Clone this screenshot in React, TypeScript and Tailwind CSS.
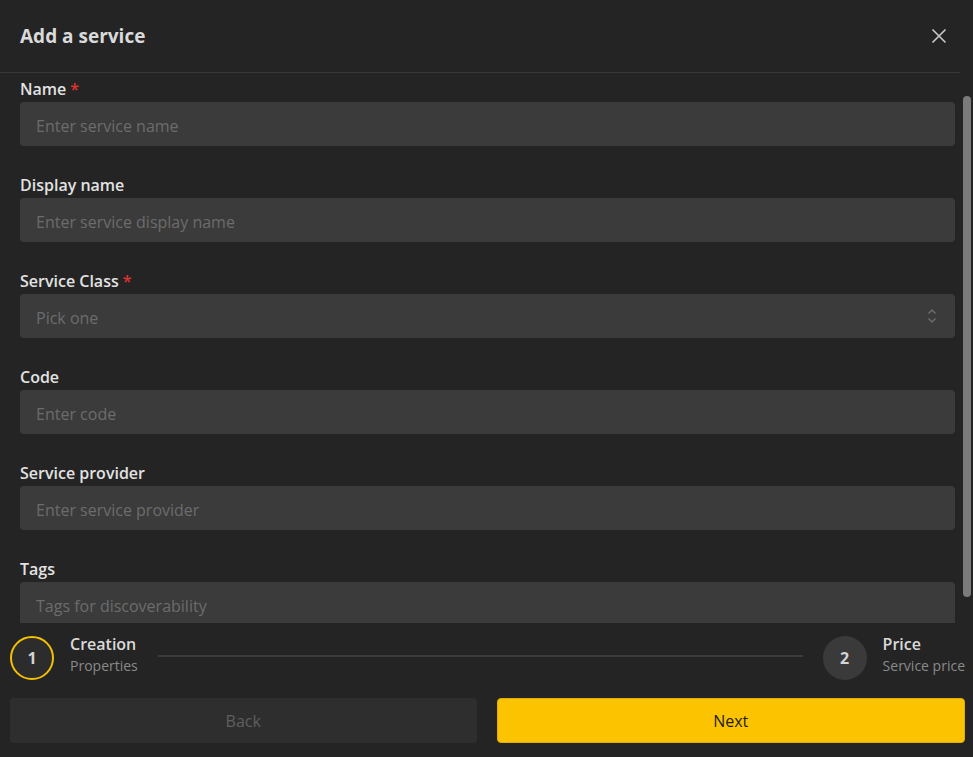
import React from 'react';

const fields = [
  { label: 'Name', required: true, placeholder: 'Enter service name' },
  { label: 'Display name', placeholder: 'Enter service display name' },
  { label: 'Service Class', required: true, placeholder: 'Pick one', select: true },
  { label: 'Code', placeholder: 'Enter code' },
  { label: 'Service provider', placeholder: 'Enter service provider' },
  { label: 'Tags', placeholder: 'Tags for discoverability' },
];

const Field: React.FC<{ label: string; required?: boolean; placeholder: string; select?: boolean }> = ({
  label,
  required,
  placeholder,
  select,
}) => (
  <div className="flex flex-col">
    <div className="h-[25px] flex items-center text-[16px] font-semibold text-[#e2e2e2] pb-[2px]">
      {label}
      {required && <span className="ml-1 text-[#e03131]">*</span>}
    </div>
    <div className="h-[44px] rounded-[4px] bg-[#3b3b3b] flex items-center justify-between pl-4 pr-[17px] pt-[3px] text-[16px] text-[#6c6c6c]">
      <span>{placeholder}</span>
      {select && (
        <svg width="12" height="18" viewBox="0 0 12 18" fill="none" stroke="#6c6c6c" strokeWidth="1.5" className="mt-[-3px]">
          <path d="M2.5 6.5 L6 3 L9.5 6.5" />
          <path d="M2.5 11.5 L6 15 L9.5 11.5" />
        </svg>
      )}
    </div>
  </div>
);

export default function App() {
  return (
    <div
      className="w-[973px] h-[757px] bg-[#242424] flex flex-col overflow-hidden"
      style={{ fontFamily: '"Open Sans", "Noto Sans", sans-serif' }}
    >
      <div className="h-[72px] flex items-center justify-between pl-5 pr-[26px] shrink-0">
        <h2 className="text-[19px] font-bold text-[#dadada]">Add a service</h2>
        <svg width="16" height="16" viewBox="0 0 16 16" stroke="#c9c9c9" strokeWidth="1.6">
          <path d="M1.5 1.5 L14.5 14.5 M14.5 1.5 L1.5 14.5" />
        </svg>
      </div>
      <div className="h-px bg-[#383838] mr-[13px] shrink-0" />
      <div className="h-[550px] flex shrink-0">
        <div className="flex-1 overflow-hidden pl-5 pr-2 pt-[4px] flex flex-col gap-[27px]">
          {fields.map((f) => (
            <Field key={f.label} {...f} />
          ))}
        </div>
        <div className="w-[10px] flex pt-[23px]">
          <div className="w-[8px] h-[501px] rounded-full bg-[#7b7b7b]" />
        </div>
      </div>
      <div className="flex items-center pl-[10px] pr-[8px] pt-[11px] h-[59px]">
        <div className="w-[44px] h-[44px] rounded-full border-2 border-[#f5c000] bg-[#2c2c2c] flex items-center justify-center text-[16px] font-bold text-[#d4d4d4]">
          1
        </div>
        <div className="ml-4 flex flex-col mt-[-6px]">
          <span className="text-[16px] leading-[21px] font-semibold text-[#dadada]">Creation</span>
          <span className="text-[14px] leading-[21px] text-[#8a8a8a]">Properties</span>
        </div>
        <div className="flex-1 h-[2px] bg-[#3b3b3b] mx-5 mt-[-4px]" />
        <div className="w-[44px] h-[44px] rounded-full bg-[#3a3a3a] flex items-center justify-center text-[16px] font-bold text-[#d4d4d4]">
          2
        </div>
        <div className="ml-4 flex flex-col mt-[-6px]">
          <span className="text-[16px] leading-[21px] font-semibold text-[#dadada]">Price</span>
          <span className="text-[14px] leading-[21px] text-[#8a8a8a]">Service price</span>
        </div>
      </div>
      <div className="flex gap-5 pl-[10px] pr-[8px] pt-[16px]">
        <button className="flex-1 h-[45px] rounded-[4px] bg-[#2e2e2e] text-[16px] text-[#5f5f5f]">Back</button>
        <button className="flex-1 h-[45px] rounded-[4px] bg-[#fcc400] border border-[#e0ad00] text-[16px] text-[#1c1c1c]">
          Next
        </button>
      </div>
    </div>
  );
}
